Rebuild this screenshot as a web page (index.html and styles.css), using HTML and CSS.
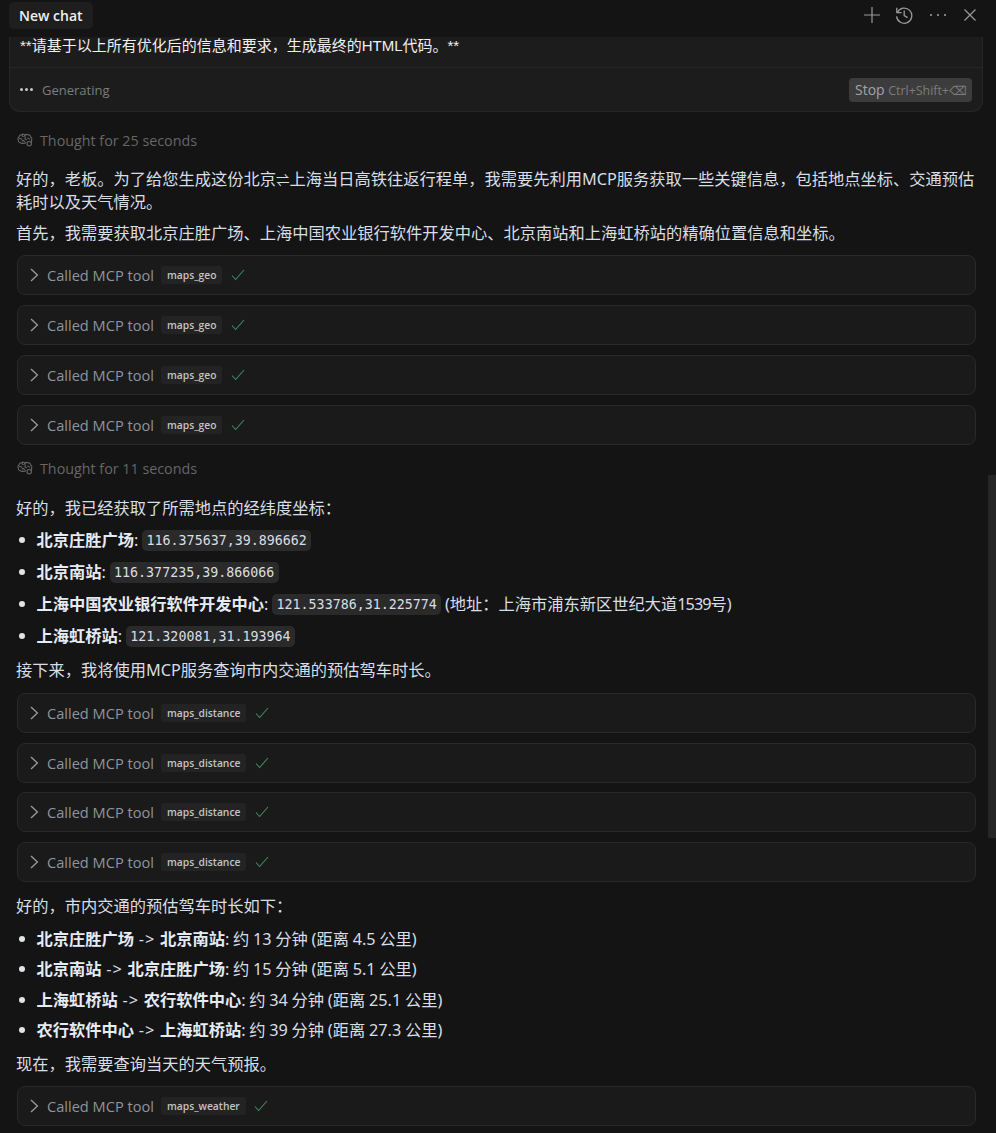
FILE: index.html
```html
<!DOCTYPE html>
<html lang="zh">
<head>
<meta charset="utf-8">
<title>New chat</title>
<link rel="stylesheet" href="styles.css">
</head>
<body>
<svg class="defs" width="0" height="0" aria-hidden="true">
  <symbol id="brain" viewBox="0 0 16 14"><g fill="none" stroke="currentColor" stroke-width="1.1" stroke-linecap="round" stroke-linejoin="round"><path d="M8 2.2C7.4 1 5.6.8 4.8 1.8 3.4 1.4 2.1 2.4 2.3 3.8 1 4.3.5 5.9 1.4 7c-.5 1.3.5 2.6 1.9 2.5.5 1 1.9 1.2 2.7.5.8.6 2 .4 2.5-.4"/><path d="M8 2.2c.8-1 2.4-1.2 3.2-.3 1.4-.3 2.6.8 2.4 2.1 1.2.6 1.6 2 .9 3 .4.8.2 1.7-.4 2.3"/><path d="M8 2.2v3c0 1 .8 1.6 1.8 1.6M4.8 1.8c0 1 .6 1.6 1.4 1.8M2.6 5.8c.8-.4 1.8-.2 2.4.5M5 8c.9-.6 2-.4 2.6.3"/><circle cx="12.2" cy="10.7" r="2.2"/><path d="M10.6 5c.9 0 1.6.4 1.9 1.2"/></g></symbol>
  <symbol id="chev" viewBox="0 0 10 14"><path d="M1 1 7.4 7 1 13" fill="none" stroke="currentColor" stroke-width="1.3"/></symbol>
  <symbol id="check" viewBox="0 0 14 12"><path d="M1 6.5 4.6 10.5 13 1" fill="none" stroke="currentColor" stroke-width="1.1"/></symbol>
</svg>

<div class="window">
  <header class="topbar">
    <div class="tab">New chat</div>
    <div class="actions">
      <svg class="act" width="16" height="18" viewBox="0 0 16 18"><path d="M8 1v16M0 9h16" fill="none" stroke="currentColor" stroke-width="1.2"/></svg>
      <svg class="act" width="18" height="18" viewBox="0 0 18 18"><g fill="none" stroke="currentColor" stroke-width="1.3"><path d="M2.4 6.2A7.6 7.6 0 1 1 1.6 10.4"/><path d="M1.8 1.8v4.8h4.8"/><path d="M9.2 4.6v5l3.4 2"/></g></svg>
      <svg class="act" width="20" height="18" viewBox="0 0 20 18"><g fill="currentColor"><circle cx="3" cy="9" r="1.1"/><circle cx="10" cy="9" r="1.1"/><circle cx="17" cy="9" r="1.1"/></g></svg>
      <svg class="act" width="14" height="14" viewBox="0 0 14 14"><path d="M1.5 1.5l11 11M12.5 1.5l-11 11" fill="none" stroke="currentColor" stroke-width="1.2"/></svg>
    </div>
  </header>

  <section class="composer">
    <p class="prompt">**请基于以上所有优化后的信息和要求&#xFF0C;生成最终的HTML代码。**</p>
    <div class="status">
      <div class="gen">
        <span class="dots"><i></i><i></i><i></i></span>
        <span>Generating</span>
      </div>
      <div class="stop">Stop <span class="kbd">Ctrl+Shift+<span class="del">⌫</span></span></div>
    </div>
  </section>

  <main class="thread">
    <div class="thought"><svg class="brain"><use href="#brain"/></svg>Thought for 25 seconds</div>
    <p class="para first">好的&#xFF0C;老板。为了给您生成这份北京<span class="swap">⇌</span>上海当日高铁往返行程单&#xFF0C;我需要先利用MCP服务获取一些关键信息&#xFF0C;包括地点坐标、交通预估耗时以及天气情况。</p>
    <p class="para">首先&#xFF0C;我需要获取北京庄胜广场、上海中国农业银行软件开发中心、北京南站和上海虹桥站的精确位置信息和坐标。</p>

    <div class="tools">
      <div class="tool"><svg class="chev"><use href="#chev"/></svg><span>Called MCP tool</span><code class="tag">maps_geo</code><svg class="check"><use href="#check"/></svg></div>
      <div class="tool"><svg class="chev"><use href="#chev"/></svg><span>Called MCP tool</span><code class="tag">maps_geo</code><svg class="check"><use href="#check"/></svg></div>
      <div class="tool"><svg class="chev"><use href="#chev"/></svg><span>Called MCP tool</span><code class="tag">maps_geo</code><svg class="check"><use href="#check"/></svg></div>
      <div class="tool"><svg class="chev"><use href="#chev"/></svg><span>Called MCP tool</span><code class="tag">maps_geo</code><svg class="check"><use href="#check"/></svg></div>
    </div>

    <div class="thought second"><svg class="brain"><use href="#brain"/></svg>Thought for 11 seconds</div>
    <p class="para first lower">好的&#xFF0C;我已经获取了所需地点的经纬度坐标&#xFF1A;</p>
    <ul class="list coords">
      <li><b>北京庄胜广场</b>: <code class="mono">116.375637,39.896662</code></li>
      <li><b>北京南站</b>: <code class="mono">116.377235,39.866066</code></li>
      <li><b>上海中国农业银行软件开发中心</b>: <code class="mono">121.533786,31.225774</code> (地址&#xFF1A;上海市浦东新区世纪大道<span class="num">1539</span>号)</li>
      <li><b>上海虹桥站</b>: <code class="mono">121.320081,31.193964</code></li>
    </ul>
    <p class="para">接下来&#xFF0C;我将使用MCP服务查询市内交通的预估驾车时长。</p>

    <div class="tools">
      <div class="tool"><svg class="chev"><use href="#chev"/></svg><span>Called MCP tool</span><code class="tag">maps_distance</code><svg class="check"><use href="#check"/></svg></div>
      <div class="tool"><svg class="chev"><use href="#chev"/></svg><span>Called MCP tool</span><code class="tag">maps_distance</code><svg class="check"><use href="#check"/></svg></div>
      <div class="tool"><svg class="chev"><use href="#chev"/></svg><span>Called MCP tool</span><code class="tag">maps_distance</code><svg class="check"><use href="#check"/></svg></div>
      <div class="tool"><svg class="chev"><use href="#chev"/></svg><span>Called MCP tool</span><code class="tag">maps_distance</code><svg class="check"><use href="#check"/></svg></div>
    </div>

    <p class="para after-tools">好的&#xFF0C;市内交通的预估驾车时长如下&#xFF1A;</p>
    <ul class="list times">
      <li><b>北京庄胜广场</b> <span class="arrow">-&gt;</span> <b>北京南站</b>: 约 13 分钟 (距离 4.5 公里)</li>
      <li><b>北京南站</b> <span class="arrow">-&gt;</span> <b>北京庄胜广场</b>: 约 15 分钟 (距离 5.1 公里)</li>
      <li><b>上海虹桥站</b> <span class="arrow">-&gt;</span> <b>农行软件中心</b>: 约 34 分钟 (距离 25.1 公里)</li>
      <li><b>农行软件中心</b> <span class="arrow">-&gt;</span> <b>上海虹桥站</b>: 约 39 分钟 (距离 27.3 公里)</li>
    </ul>
    <p class="para">现在&#xFF0C;我需要查询当天的天气预报。</p>

    <div class="tools last">
      <div class="tool"><svg class="chev"><use href="#chev"/></svg><span>Called MCP tool</span><code class="tag">maps_weather</code><svg class="check"><use href="#check"/></svg></div>
    </div>
  </main>

  <div class="scrollbar"></div>
</div>
</body>
</html>
```

FILE: styles.css
```css
* { box-sizing: border-box; }
html, body { margin: 0; height: 100%; background: #141414; }
body { overflow: hidden; }
.defs { position: absolute; }
.window {
  position: relative;
  height: 1133px;
  overflow: hidden;
  background: #141414;
  color: #d8dee6;
  font-family: "Open Sans", "Noto Sans CJK SC", sans-serif;
  font-size: 15px;
}
.topbar {
  height: 37px;
  display: flex;
  align-items: flex-start;
  justify-content: space-between;
  padding: 2px 19px 0 9px;
}
.tab {
  height: 27px;
  line-height: 27px;
  padding: 0 10px;
  border-radius: 5px;
  background: #1e1e1e;
  color: #f0f0f0;
  font-size: 14px;
  font-weight: 600;
}
.actions {
  display: flex;
  align-items: center;
  gap: 15px;
  height: 26px;
  color: #9a9a9a;
}
.composer {
  margin: 0 13px 0 9px;
  height: 75px;
  background: #1c1c1c;
  border: 1px solid #272727;
  border-top: 0;
  border-radius: 0 0 11px 11px;
}
.prompt {
  margin: 0;
  height: 30px;
  padding: 0 10px;
  line-height: 18px;
  color: #f0f0f0;
  font-family: "Liberation Sans", "Noto Sans CJK SC", sans-serif;
  font-size: 15px;
}
.status {
  height: 44px;
  border-top: 1px solid #272727;
  display: flex;
  align-items: center;
  justify-content: space-between;
  padding: 0 10px;
  color: #7d7d7d;
  font-size: 13px;
}
.gen { display: flex; align-items: center; gap: 8px; }
.dots { display: flex; gap: 2px; width: 14px; }
.dots i { width: 3px; height: 3px; border-radius: 50%; background: #c9c9c9; }
.stop {
  height: 24px;
  line-height: 24px;
  padding: 0 5.5px;
  border-radius: 4px;
  background: #3c3c3c;
  color: #a4a4a4;
  font-size: 14px;
  white-space: nowrap;
}
.kbd { color: #7d7d7d; font-size: 12.4px; }
.del { font-family: "DejaVu Sans", sans-serif; }
.thread { padding: 18px 20px 0 17px; }
.thought {
  display: flex;
  align-items: center;
  height: 20px;
  color: #666;
  font-size: 14.3px;
}
.thought.second { margin-top: 13.3px; }
.brain { width: 16px; height: 14px; margin-right: 7px; }
.para {
  margin: 0 0 0 -1px;
  padding-top: 8px;
  line-height: 23px;
  font-family: "Noto Sans", "Noto Sans CJK SC", sans-serif;
  font-size: 16.25px;
}
.para.first { padding-top: 18px; }
.para.first.lower { padding-top: 19px; }
.para.after-tools { padding-top: 12.8px; }
.list + .para { padding-top: 6.9px; }
.times + .para { padding-top: 7.2px; }
.swap { font-size: 13.5px; line-height: 1; }
.tools { margin-top: 10.4px; display: flex; flex-direction: column; gap: 9.8px; }
.tools.last { margin-top: 10.5px; }
.tool {
  height: 40px;
  display: flex;
  align-items: center;
  padding-left: 12px;
  border: 1px solid #292929;
  border-radius: 8px;
  background: #1a1a1a;
  color: #8f959c;
  font-size: 14.6px;
}
.chev { width: 10px; height: 14px; margin-right: 7px; color: #9a9a9a; }
.tag {
  margin-left: 7px;
  padding: 0 6px;
  height: 18px;
  line-height: 18px;
  background: #232323;
  border-radius: 3px;
  color: #c4c4c4;
  font-family: "Open Sans", sans-serif;
  font-size: 10.3px;
  font-weight: 600;
}
.check { width: 14px; height: 12px; margin-left: 8.5px; color: #3f8a5f; }
.list {
  margin: 0;
  padding: 0 0 0 19.5px;
  list-style: none;
  font-family: "Noto Sans", "Noto Sans CJK SC", sans-serif;
  font-size: 16.25px;
}
.list li { position: relative; height: 32px; line-height: 32px; white-space: nowrap; }
.list li::before {
  content: "";
  position: absolute;
  left: -18px;
  top: 13px;
  width: 6px;
  height: 6px;
  border-radius: 50%;
  background: #dfe5ec;
}
.list b { color: #e4ebf5; font-weight: 700; }
.num { letter-spacing: -1px; }
.arrow { margin: 0 1px; letter-spacing: 1px; }
.coords { margin-top: 4.4px; word-spacing: -0.5px; }
.times { margin-top: 5.9px; word-spacing: -0.5px; }
.times li { height: 30.4px; line-height: 30.4px; }
.times li::before { top: 12px; }
.mono {
  display: inline-block;
  height: 21px;
  line-height: 21px;
  margin-top: 5.5px;
  padding: 0 4.5px;
  border-radius: 5px;
  background: #2a2a2a;
  font-family: "DejaVu Sans Mono", monospace;
  font-size: 13.3px;
  color: #d8dee6;
  vertical-align: top;
}
.scrollbar {
  position: absolute;
  right: 0;
  top: 475px;
  width: 8px;
  height: 363px;
  background: #262626;
}
```
